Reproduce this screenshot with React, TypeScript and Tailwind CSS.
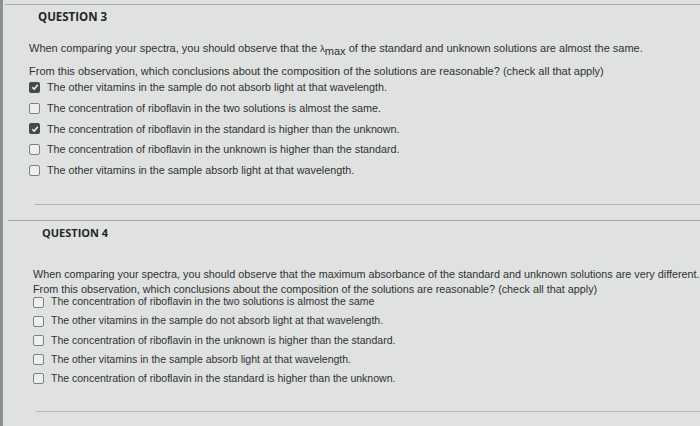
import React from "react";

const q3Options = [
  { text: "The other vitamins in the sample do not absorb light at that wavelength.", checked: true },
  { text: "The concentration of riboflavin in the two solutions is almost the same.", checked: false },
  { text: "The concentration of riboflavin in the standard is higher than the unknown.", checked: true },
  { text: "The concentration of riboflavin in the unknown is higher than the standard.", checked: false },
  { text: "The other vitamins in the sample absorb light at that wavelength.", checked: false },
];

const q4Options = [
  "The concentration of riboflavin in the two solutions is almost the same",
  "The other vitamins in the sample do not absorb light at that wavelength.",
  "The concentration of riboflavin in the unknown is higher than the standard.",
  "The other vitamins in the sample absorb light at that wavelength.",
  "The concentration of riboflavin in the standard is higher than the unknown.",
];

function Box({ checked }: { checked: boolean }) {
  if (checked) {
    return (
      <span className="flex h-[11px] w-[11px] shrink-0 items-center justify-center rounded-[2px] bg-[#45484a]">
        <svg viewBox="0 0 10 10" className="h-[8px] w-[8px]">
          <path d="M1.5 5.2 L4 7.6 L8.5 2.2" stroke="#f2f2f2" strokeWidth="1.8" fill="none" />
        </svg>
      </span>
    );
  }
  return <span className="h-[11px] w-[11px] shrink-0 rounded-[2px] border border-[#7f8283] bg-[#eef0ef]" />;
}

export default function App() {
  return (
    <div
      className="h-[426px] w-[700px] overflow-hidden border-l-[3px] border-[#8e9192] bg-[#e0e2e1] text-[#2f3132]"
      style={{ fontFamily: '"Liberation Sans", Arial, sans-serif' }}
    >
      <div className="ml-[2px] mt-[4px] h-px bg-[#a9abab]" />

      {/* Question 3 */}
      <section className="pl-[26px]">
        <h2
          className="ml-[9px] mt-[5px] text-[11.5px] font-bold leading-[14px] text-[#242627]"
          style={{ fontFamily: '"Open Sans", sans-serif' }}
        >
          QUESTION 3
        </h2>
        <p className="mt-[13px] text-[11px] leading-[22px]">
          When comparing your spectra, you should observe that the{" "}
          <span className="text-[9.5px]">λ</span>
          <sub className="text-[11px]">max</sub> of the standard and unknown solutions are almost the same.
          <br />
          From this observation, which conclusions about the composition of the solutions are reasonable? (check all that apply)
        </p>
        <div className="-mt-[5px] flex flex-col">
          {q3Options.map((o) => (
            <label key={o.text} className="flex h-[20.7px] items-center gap-[7px] text-[10.75px]">
              <Box checked={o.checked} />
              <span>{o.text}</span>
            </label>
          ))}
        </div>
        <div className="ml-[6px] mt-[24px] h-px bg-[#b3b5b5]" />
      </section>

      {/* Question 4 */}
      <div className="ml-[5px] mt-[15px] h-px bg-[#a5a7a7]" />
      <section className="pl-[30px]">
        <h2
          className="ml-[9px] mt-[5px] text-[11px] font-bold leading-[14px] text-[#242627]"
          style={{ fontFamily: '"Open Sans", sans-serif' }}
        >
          QUESTION 4
        </h2>
        <p className="mt-[27px] whitespace-nowrap text-[10.8px] leading-[15px]">
          When comparing your spectra, you should observe that the maximum absorbance of the standard and unknown solutions are very different.
          <br />
          From this observation, which conclusions about the composition of the solutions are reasonable? (check all that apply)
        </p>
        <div className="-mt-[5px] flex flex-col">
          {q4Options.map((t) => (
            <label key={t} className="flex h-[19.2px] items-center gap-[7px] text-[10.5px]">
              <Box checked={false} />
              <span>{t}</span>
            </label>
          ))}
        </div>
        <div className="ml-[3px] mt-[23px] h-px bg-[#b8baba]" />
      </section>
    </div>
  );
}
